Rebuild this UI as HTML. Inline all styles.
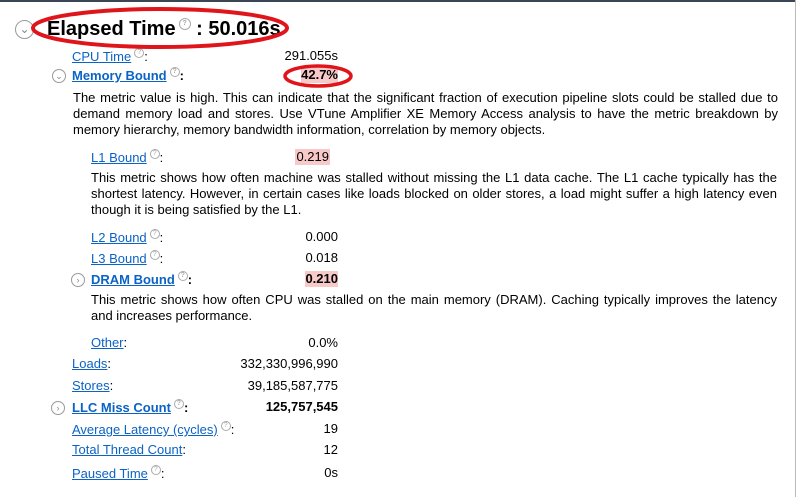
<!DOCTYPE html>
<html><head><style>
body{margin:0;width:796px;height:497px;background:#fff;overflow:hidden;position:relative;font-family:"Liberation Sans","DejaVu Sans",sans-serif;font-size:13px;color:#000}
.a{position:absolute;white-space:nowrap;line-height:16px}
a,.l{color:#0b63c5;text-decoration:underline}
.b{font-weight:bold}
.v{position:absolute;right:458px;white-space:nowrap;line-height:16px}
.pk{background:#f8c9c9}
.q{display:inline-block;width:8px;height:8px;border:1px solid #aaa;border-radius:50%;font-size:7px;line-height:8px;text-align:center;color:#aaa;vertical-align:7px;margin-left:3px}
.ic{position:absolute;width:12px;height:12px;border:1px solid #999;border-radius:50%;color:#888;font-size:9px;line-height:12px;text-align:center}
.p{position:absolute;left:73px;width:705px;line-height:16px;text-align:justify}
</style></head><body>
<div style="position:absolute;left:0;top:0;width:796px;height:2px;background:#3a4654"></div>
<div style="position:absolute;right:0;top:0;width:1px;height:497px;background:#bbb"></div>
<div class="ic" style="left:15px;top:20px;width:17px;height:17px;line-height:17px;font-size:12px">⌄</div>
<div class="a b" style="left:47px;top:17px;font-size:20px;line-height:24px">Elapsed Time<span class="q" style="width:10px;height:10px;line-height:10px;vertical-align:10px">?</span> : 50.016s</div>
<div class="a" style="left:72px;top:48px"><span class="l">CPU Time</span><span class="q">?</span>:</div><div class="v" style="top:48px">291.055s</div>
<div class="ic" style="left:52px;top:69px">⌄</div>
<div class="a b" style="left:72px;top:67px"><span class="l">Memory Bound</span><span class="q">?</span>:</div><div class="v b pk" style="top:67px">42.7%</div>
<div class="p" style="top:90px">The metric value is high. This can indicate that the significant fraction of execution pipeline slots could be stalled due to demand memory load and stores. Use VTune Amplifier XE Memory Access analysis to have the metric breakdown by memory hierarchy, memory bandwidth information, correlation by memory objects.</div>
<div class="a" style="left:91px;top:149px"><span class="l">L1 Bound</span><span class="q">?</span>:</div><div class="v pk" style="top:149px;right:466px;padding:0 1px">0.219</div>
<div class="p" style="top:170px;left:91px;width:686px">This metric shows how often machine was stalled without missing the L1 data cache. The L1 cache typically has the shortest latency. However, in certain cases like loads blocked on older stores, a load might suffer a high latency even though it is being satisfied by the L1.</div>
<div class="a" style="left:91px;top:229px"><span class="l">L2 Bound</span><span class="q">?</span>:</div><div class="v" style="top:229px">0.000</div>
<div class="a" style="left:91px;top:250px"><span class="l">L3 Bound</span><span class="q">?</span>:</div><div class="v" style="top:250px">0.018</div>
<div class="ic" style="left:71px;top:273px">›</div>
<div class="a b" style="left:91px;top:271px"><span class="l">DRAM Bound</span><span class="q">?</span>:</div><div class="v b pk" style="top:271px">0.210</div>
<div class="p" style="top:292px;left:91px;width:686px">This metric shows how often CPU was stalled on the main memory (DRAM). Caching typically improves the latency and increases performance.</div>
<div class="a" style="left:91px;top:335px"><span class="l">Other</span>:</div><div class="v" style="top:335px">0.0%</div>
<div class="a" style="left:72px;top:356px"><span class="l">Loads</span>:</div><div class="v" style="top:356px">332,330,996,990</div>
<div class="a" style="left:72px;top:378px"><span class="l">Stores</span>:</div><div class="v" style="top:378px">39,185,587,775</div>
<div class="ic" style="left:51px;top:401px">›</div>
<div class="a b" style="left:72px;top:399px"><span class="l">LLC Miss Count</span><span class="q">?</span>:</div><div class="v b" style="top:399px">125,757,545</div>
<div class="a" style="left:72px;top:421px"><span class="l">Average Latency (cycles)</span><span class="q">?</span>:</div><div class="v" style="top:421px">19</div>
<div class="a" style="left:72px;top:442px"><span class="l">Total Thread Count</span>:</div><div class="v" style="top:442px">12</div>
<div class="a" style="left:72px;top:465px"><span class="l">Paused Time</span><span class="q">?</span>:</div><div class="v" style="top:465px">0s</div>
<svg style="position:absolute;left:0;top:0" width="796" height="497"><ellipse cx="160" cy="28" rx="127" ry="19" fill="none" stroke="#e0151b" stroke-width="4"/><ellipse cx="318" cy="76" rx="33" ry="10" fill="none" stroke="#e0151b" stroke-width="3.5"/></svg>
</body></html>
